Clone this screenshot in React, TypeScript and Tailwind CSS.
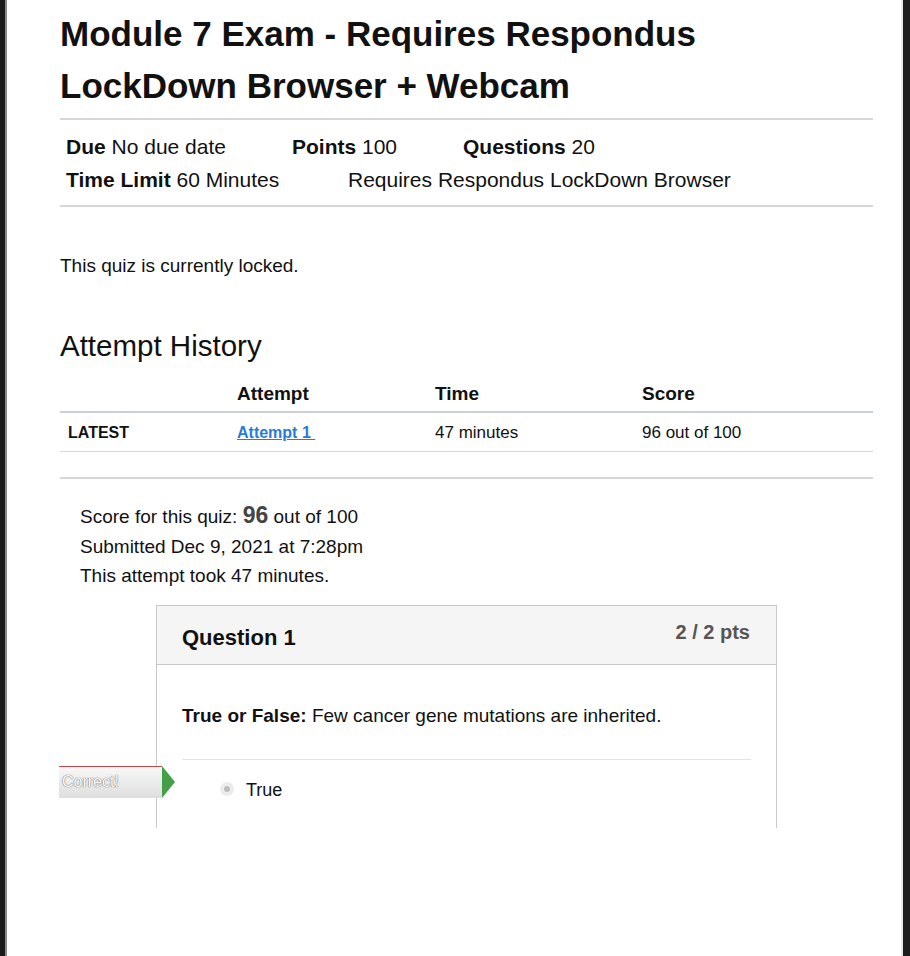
import React from "react";

export default function App() {
  const font = { fontFamily: '"Liberation Sans", Arial, Helvetica, sans-serif' };
  return (
    <div className="flex h-[956px] w-[910px] overflow-hidden bg-white text-[#111]" style={font}>
      <div className="w-[5px] bg-[#1b1b1b]" />
      <div className="w-[2px] bg-[#8a8a8a]" />
      <div className="flex-1 bg-white pl-[53px] pr-[28px]">
        <h1 className="mt-[8px] text-[35px] font-bold leading-[52px]">
          Module 7 Exam - Requires Respondus
          <br />
          LockDown Browser + Webcam
        </h1>
        <div className="mt-[6px] border-t-2 border-[#d6d6d6]" />
        <div className="pl-[6px] pt-[10px] pb-[9px] text-[21px] leading-[33px]">
          <div className="flex">
            <span className="w-[226px]">
              <b>Due</b> No due date
            </span>
            <span className="w-[171px]">
              <b>Points</b> 100
            </span>
            <span>
              <b>Questions</b> 20
            </span>
          </div>
          <div className="flex">
            <span className="w-[282px]">
              <b>Time Limit</b> 60 Minutes
            </span>
            <span>Requires Respondus LockDown Browser</span>
          </div>
        </div>
        <div className="border-t-2 border-[#d6d6d6]" />

        <p className="mt-[47px] text-[19px] leading-[24px]">This quiz is currently locked.</p>

        <h2 className="mt-[50px] text-[29.5px] leading-[36px]">Attempt History</h2>

        <div className="mt-[18px]">
          <div className="grid grid-cols-[177px_198px_207px_1fr] border-b-2 border-[#c9d0d6] pb-[5px] text-[19px] font-bold leading-[24px]">
            <div />
            <div>Attempt</div>
            <div>Time</div>
            <div>Score</div>
          </div>
          <div className="grid grid-cols-[177px_198px_207px_1fr] border-b border-[#d3d8dc] pt-[8px] pb-[6px] text-[17px] leading-[24px]">
            <div className="pl-[8px] text-[16px] font-bold">LATEST</div>
            <div>
              <a href="#" className="text-[16px] font-bold text-[#2b7bd6] underline">
                Attempt 1&nbsp;
              </a>
            </div>
            <div>47 minutes</div>
            <div>96 out of 100</div>
          </div>
        </div>

        <div className="mt-[25px] border-t-2 border-[#d6d6d6]" />

        <div className="mt-[22px] pl-[20px] text-[19px] leading-[29.5px]">
          <div>
            Score for this quiz: <span className="text-[23px] font-bold text-[#444]">96</span> out of 100
          </div>
          <div>Submitted Dec 9, 2021 at 7:28pm</div>
          <div>This attempt took 47 minutes.</div>
        </div>

        <div className="relative ml-[96px] mt-[14px] w-[621px] border-x border-t border-[#c8c8c8]">
          <div className="flex h-[59px] items-start justify-between border-b border-[#c8c8c8] bg-[#f5f5f5] pl-[25px] pr-[26px] pt-[13px]">
            <div className="mt-[5px] text-[22px] font-bold leading-[28px]">Question 1</div>
            <div className="text-[20px] font-bold leading-[26px] text-[#555]">2 / 2 pts</div>
          </div>
          <div className="px-[25px] pt-[38px]">
            <p className="text-[19px] leading-[26px]">
              <b>True or False:</b> Few cancer gene mutations are inherited.
            </p>
            <div className="mt-[30px] border-t border-[#e2e2e2]" />
            <div className="flex h-[68px] items-start pt-[17px]">
              <div className="ml-[38px] mt-[5px] flex h-[14px] w-[14px] items-center justify-center rounded-full bg-[#ececec]">
                <div className="h-[6px] w-[6px] rounded-full bg-[#bdbdbd]" />
              </div>
              <span className="ml-[12px] text-[18px] leading-[26px]">True</span>
            </div>
          </div>

          <div className="absolute left-[-98px] top-[160px] flex h-[32px] items-stretch">
            <div className="flex w-[103px] items-center border-t border-[#c44] bg-gradient-to-b from-[#f8f8f8] to-[#dedede] pl-[3px]">
              <span
                className="text-[16px] leading-none text-white"
                style={{ textShadow: "0 0 1px #666, 0 0 1px #666" }}
              >
                Correct!
              </span>
            </div>
            <svg width="13" height="32" viewBox="0 0 13 32" className="block">
              <polygon points="0,0 13,16 0,32" fill="#43a047" />
            </svg>
          </div>
        </div>
      </div>
      <div className="w-[2px] bg-[#e6e6e6]" />
      <div className="w-[7px] bg-[#1b1b1b]" />
    </div>
  );
}
